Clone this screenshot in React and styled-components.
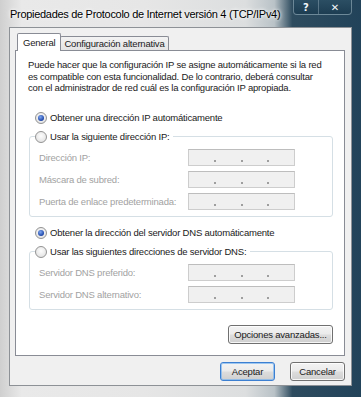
import styled, { createGlobalStyle } from 'styled-components';

const GlobalStyle = createGlobalStyle`
  html, body { margin: 0; padding: 0; }
  body {
    width: 361px;
    height: 397px;
    overflow: hidden;
    font-family: "Liberation Sans", Arial, sans-serif;
  }
  * { box-sizing: border-box; }
`;

const Frame = styled.div`
  width: 361px;
  height: 397px;
  padding: 0 9px 11px 9px;
  display: flex;
  flex-direction: column;
  background: linear-gradient(to right, #cfcfcf 0%, #e9e9e9 6%, #e6e6e6 40%, #dcdedf 68%, #b9c2c7 76%, #2e4c5f 81%, #22435a 100%);
`;

const TitleBar = styled.div`
  height: 27px;
  display: flex;
  justify-content: space-between;
  align-items: flex-start;
`;

const Title = styled.div`
  margin-top: 8px;
  padding-left: 1px;
  font-size: 11px;
  letter-spacing: -0.3px;
  color: #000;
  white-space: nowrap;
  text-shadow: 0 0 5px #fff, 0 0 3px #fff;
`;

const CaptionButtons = styled.div`
  display: flex;
  width: 59px;
  height: 15px;
  background: linear-gradient(#2b4e63, #1d3d52);
  border: 1px solid rgba(190, 210, 220, 0.45);
  border-top: none;
  border-radius: 0 0 4px 4px;
`;

const CaptionButton = styled.div`
  flex: ${p => (p.$wide ? 34 : 25)};
  display: flex;
  align-items: center;
  justify-content: center;
  color: #f4f7f9;
  font-family: "DejaVu Sans", sans-serif;
  font-weight: bold;
  font-size: 10px;
  border-left: ${p => (p.$wide ? '1px solid rgba(190, 210, 220, 0.35)' : 'none')};
`;

const Client = styled.div`
  flex: 1;
  display: flex;
  flex-direction: column;
  background: #f0f0f0;
  border: 1px solid #8d9196;
  padding: 5px 6px 4px 5px;
`;

const TabStrip = styled.div`
  display: flex;
  align-items: flex-end;
  height: 18px;
  margin-bottom: -1px;
  padding-left: 2px;
`;

const Tab = styled.div`
  position: relative;
  z-index: ${p => (p.$active ? 2 : 1)};
  height: ${p => (p.$active ? 18 : 14)}px;
  margin-bottom: ${p => (p.$active ? 0 : 1)}px;
  margin-left: ${p => (p.$active ? 0 : -1)}px;
  padding: 0 ${p => (p.$active ? 5 : 3)}px;
  display: flex;
  align-items: center;
  font-size: 9.5px;
  letter-spacing: -0.2px;
  color: #1a1a1a;
  background: ${p => (p.$active ? '#fff' : 'linear-gradient(#f3f3f3, #e4e4e4)')};
  border: 1px solid #898c95;
  border-bottom: none;
  border-radius: 2px 2px 0 0;
`;

const TabPage = styled.div`
  flex: 1;
  display: flex;
  flex-direction: column;
  background: #fff;
  border: 1px solid #898c95;
  padding: 8px 11px 0 12px;
`;

const Description = styled.p`
  margin: 0;
  font-size: 9.5px;
  line-height: 11.5px;
  letter-spacing: -0.2px;
  color: #1a1a1a;
  white-space: nowrap;
`;

const RadioRow = styled.label`
  display: flex;
  align-items: center;
  gap: 3px;
  height: 14px;
  margin: ${p => p.$top || 0}px 0 0 7px;
  font-size: 9.5px;
  letter-spacing: -0.2px;
  color: #1a1a1a;
  white-space: nowrap;
`;

const RadioDot = styled.span`
  width: 12px;
  height: 12px;
  border-radius: 50%;
  border: 1px solid #939393;
  background: radial-gradient(circle at 50% 40%, #fdfdfd, #dcdcdc);
  display: flex;
  align-items: center;
  justify-content: center;

  &::after {
    content: '';
    width: 6px;
    height: 6px;
    border-radius: 50%;
    display: ${p => (p.$checked ? 'block' : 'none')};
    background: radial-gradient(circle at 40% 35%, #7fa8f0, #1b44a8 70%, #0e2c7a);
  }
`;

const GroupBox = styled.fieldset`
  margin: 5px 0 0 1px;
  padding: 5px 0 6px 9px;
  border: 1px solid #d5dfe5;
  border-radius: 3px;
  display: flex;
  flex-direction: column;
  gap: 5px;
  min-width: 0;

  legend {
    margin-left: -4px;
    padding: 0 4px 0 0;
  }

  legend ${RadioRow} {
    margin: 0;
  }
`;

const FieldRow = styled.div`
  display: flex;
  align-items: center;
  height: 17px;
`;

const FieldLabel = styled.span`
  width: 149px;
  font-size: 9.5px;
  letter-spacing: -0.2px;
  color: #a2a2a2;
  white-space: nowrap;
`;

const IpBox = styled.div`
  width: 107px;
  height: 17px;
  display: flex;
  background: #f0f0f0;
  border: 1px solid #cdcdcd;
  border-top-color: #bdbdbd;
`;

const Octet = styled.span`
  flex: 1;
  display: flex;
  align-items: flex-end;
  justify-content: flex-start;
  padding-bottom: 3px;

  &::before {
    content: '';
    width: 2px;
    height: 2px;
    margin-left: -1px;
    background: #9e9e9e;
    display: ${p => (p.$first ? 'none' : 'block')};
  }
`;

const Button = styled.button`
  width: ${p => p.$width || 55}px;
  height: 19px;
  padding: 0;
  font-family: inherit;
  font-size: 9.5px;
  letter-spacing: -0.2px;
  color: #1a1a1a;
  border: 1px solid ${p => (p.$default ? '#3c7fd1' : '#707070')};
  border-radius: 3px;
  background: linear-gradient(#f3f3f3 0%, #ebebeb 48%, #dddddd 52%, #cfcfcf 100%);
  box-shadow: inset 0 0 0 1px ${p => (p.$default ? 'rgba(120, 180, 240, 0.7)' : 'rgba(255, 255, 255, 0.8)')};
`;

const AdvancedRow = styled.div`
  display: flex;
  justify-content: flex-end;
  margin-top: 15px;
`;

const ButtonBar = styled.div`
  display: flex;
  justify-content: flex-end;
  gap: 15px;
  margin-top: 6px;
`;

function IpField({ label }) {
  return (
    <FieldRow>
      <FieldLabel>{label}</FieldLabel>
      <IpBox>
        <Octet $first />
        <Octet />
        <Octet />
        <Octet />
      </IpBox>
    </FieldRow>
  );
}

function Radio({ checked, children, top }) {
  return (
    <RadioRow $top={top}>
      <RadioDot $checked={checked} />
      {children}
    </RadioRow>
  );
}

export default function App() {
  return (
    <>
      <GlobalStyle />
      <Frame>
        <TitleBar>
          <Title>Propiedades de Protocolo de Internet versión 4 (TCP/IPv4)</Title>
          <CaptionButtons>
            <CaptionButton>?</CaptionButton>
            <CaptionButton $wide>✕</CaptionButton>
          </CaptionButtons>
        </TitleBar>
        <Client>
          <TabStrip>
            <Tab $active>General</Tab>
            <Tab>Configuración alternativa</Tab>
          </TabStrip>
          <TabPage>
            <Description>
              Puede hacer que la configuración IP se asigne automáticamente si la red
              <br />
              es compatible con esta funcionalidad. De lo contrario, deberá consultar
              <br />
              con el administrador de red cuál es la configuración IP apropiada.
            </Description>
            <Radio checked top={17}>Obtener una dirección IP automáticamente</Radio>
            <GroupBox>
              <legend>
                <Radio>Usar la siguiente dirección IP:</Radio>
              </legend>
              <IpField label="Dirección IP:" />
              <IpField label="Máscara de subred:" />
              <IpField label="Puerta de enlace predeterminada:" />
            </GroupBox>
            <Radio checked top={9}>Obtener la dirección del servidor DNS automáticamente</Radio>
            <GroupBox>
              <legend>
                <Radio>Usar las siguientes direcciones de servidor DNS:</Radio>
              </legend>
              <IpField label="Servidor DNS preferido:" />
              <IpField label="Servidor DNS alternativo:" />
            </GroupBox>
            <AdvancedRow>
              <Button $width={105}>Opciones avanzadas...</Button>
            </AdvancedRow>
          </TabPage>
          <ButtonBar>
            <Button $default>Aceptar</Button>
            <Button>Cancelar</Button>
          </ButtonBar>
        </Client>
      </Frame>
    </>
  );
}
